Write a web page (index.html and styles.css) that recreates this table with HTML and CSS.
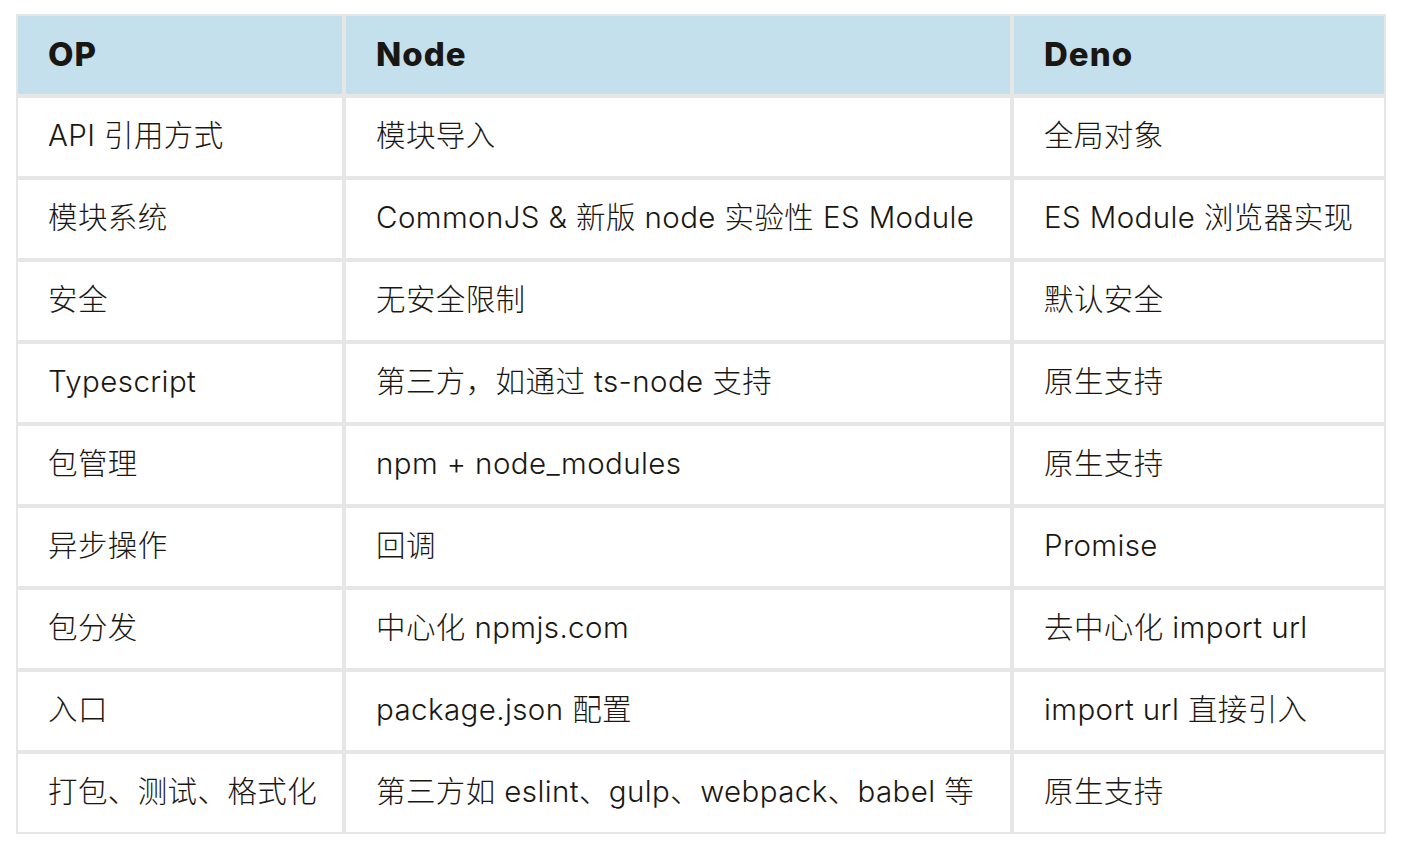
FILE: index.html
```html
<!DOCTYPE html>
<html lang="zh-CN">
<head>
<meta charset="utf-8">
<title>Node vs Deno</title>
<link rel="stylesheet" href="styles.css">
</head>
<body>
<table class="cmp">
  <thead>
    <tr><th class="c1">OP</th><th class="c2">Node</th><th class="c3">Deno</th></tr>
  </thead>
  <tbody>
    <tr><td>API 引用方式</td><td>模块导入</td><td>全局对象</td></tr>
    <tr><td>模块系统</td><td>CommonJS &amp; 新版 node 实验性 ES Module</td><td>ES Module 浏览器实现</td></tr>
    <tr><td>安全</td><td>无安全限制</td><td>默认安全</td></tr>
    <tr><td>Typescript</td><td>第三方，如通过 ts-node 支持</td><td>原生支持</td></tr>
    <tr><td>包管理</td><td>npm + node_modules</td><td>原生支持</td></tr>
    <tr><td>异步操作</td><td>回调</td><td>Promise</td></tr>
    <tr><td>包分发</td><td>中心化 npmjs.com</td><td>去中心化 import url</td></tr>
    <tr><td>入口</td><td>package.json 配置</td><td>import url 直接引入</td></tr>
    <tr><td>打包、测试、格式化</td><td>第三方如 eslint、gulp、webpack、babel 等</td><td>原生支持</td></tr>
  </tbody>
</table>
</body>
</html>
```
FILE: styles.css
```css
html, body {
  margin: 0;
  padding: 0;
  background: #ffffff;
}
body {
  padding: 14px 0 0 16px;
  font-family: Inter, "Noto Sans CJK SC", sans-serif;
  color: #1a1713;
}
.cmp {
  border-collapse: separate;
  border-spacing: 0;
  table-layout: fixed;
  width: 1370px;
}
.cmp th, .cmp td {
  box-sizing: border-box;
  height: 82px;
  border: 2px solid #e6e6e6;
  padding: 0 0 2px 30px;
  text-align: left;
  vertical-align: middle;
  white-space: nowrap;
  font-size: 29.5px;
  letter-spacing: 0.4px;
  line-height: 1;
}
.cmp th {
  background: #c4e0ed;
  font-weight: 800;
  font-size: 33px;
  letter-spacing: 1px;
}
.cmp td {
  font-weight: 300;
}
.c1 { width: 328px; }
.c2 { width: 668px; }
.c3 { width: 374px; }
```
